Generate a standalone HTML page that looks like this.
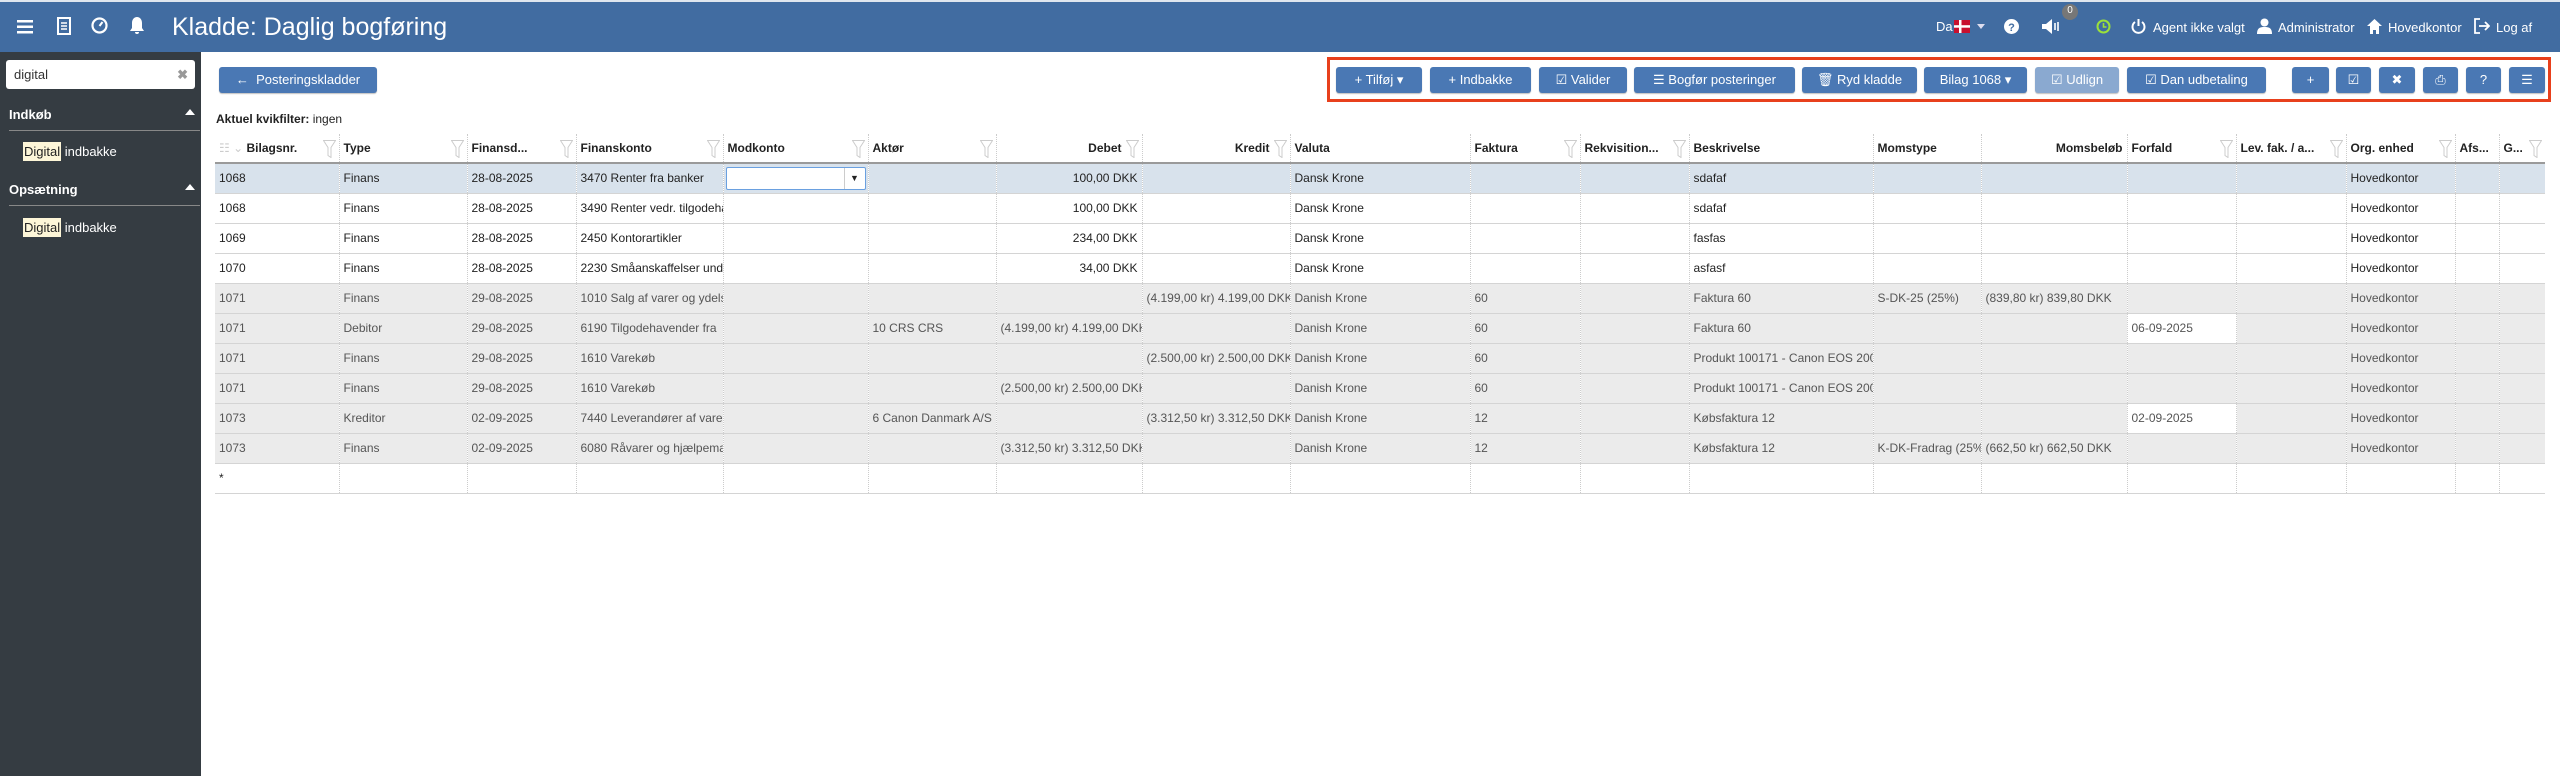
<!DOCTYPE html>
<html><head><meta charset="utf-8">
<style>
*{box-sizing:border-box;margin:0;padding:0}
body{width:2560px;height:776px;overflow:hidden;background:#fff;font-family:"Liberation Sans",Arial,sans-serif;position:relative;color:#222}
#top{position:absolute;left:0;top:0;width:2560px;height:52px;background:#416ca1;border-top:2px solid #dfe6ee}
#side{position:absolute;left:0;top:52px;width:201px;height:724px;background:#353c42}
.abs{position:absolute}
.tw{color:#fff;font-size:14px;white-space:nowrap}
.btn{position:absolute;top:67px;height:26px;background:#4a78b4;border-radius:3px;color:#fff;font-size:13px;line-height:26px;text-align:center;white-space:nowrap;box-shadow:0 1px 1px rgba(0,0,0,.25)}
table{position:absolute;left:215px;top:134px;border-collapse:collapse;table-layout:fixed;width:2330px;font-size:12px}
td,th{height:30px;padding:0 4px;overflow:hidden;white-space:nowrap;border-left:1px dotted #ccc;border-bottom:1px solid #d4d4d4;text-align:left}
th{height:29px;border-bottom:2px solid #9a9a9a;font-weight:bold;position:relative;font-size:12px}
td:first-child,th:first-child{border-left:none}
.r{text-align:right}
tr.sel td{background:#d8e2ec}
tr.g td{background:#ebebeb;color:#555}
td.wh{background:#fff!important;color:#222}
.f{position:absolute;right:3px;top:6px}
</style></head><body>
<div id="top">
<svg class="abs" style="left:17px;top:17px" width="16" height="15"><rect y="1" width="16" height="2.5" fill="#fff"/><rect y="6.5" width="16" height="2.5" fill="#fff"/><rect y="12" width="16" height="2.5" fill="#fff"/></svg>
<svg class="abs" style="left:57px;top:15px" width="14" height="18"><rect x="1" y="1" width="12" height="16" fill="none" stroke="#fff" stroke-width="2"/><path d="M4 6h6M4 9h6M4 12h6" stroke="#fff" stroke-width="1.5"/></svg>
<svg class="abs" style="left:91px;top:15px" width="17" height="17"><circle cx="8.5" cy="8.5" r="7" fill="none" stroke="#fff" stroke-width="2.2"/><path d="M8.5 9l3-4" stroke="#fff" stroke-width="2"/></svg>
<svg class="abs" style="left:130px;top:14px" width="14" height="19"><path d="M7 1c-3 0-5 2.5-5 6v5l-2 3h14l-2-3V7c0-3.5-2-6-5-6zM5 16a2 2 0 0 0 4 0z" fill="#fff"/></svg>
<div class="abs tw" style="left:172px;top:11px;font-size:25px">Kladde: Daglig bogføring</div>
<div class="abs tw" style="left:1936px;top:17px;font-size:13px">Da</div>
<svg class="abs" style="left:1954px;top:18px" width="16" height="13"><rect width="16" height="13" fill="#c8102e"/><rect x="5" width="2.5" height="13" fill="#fff"/><rect y="5.2" width="16" height="2.5" fill="#fff"/></svg>
<svg class="abs" style="left:1977px;top:22px" width="8" height="5"><path d="M0 0h8L4 5z" fill="#dde"/></svg>
<svg class="abs" style="left:2004px;top:17px" width="15" height="15"><circle cx="7.5" cy="7.5" r="7.5" fill="#fff"/><text x="7.5" y="12" font-size="11" font-weight="bold" text-anchor="middle" fill="#416ca1" font-family="Liberation Sans">?</text></svg>
<svg class="abs" style="left:2042px;top:17px" width="18" height="15"><path d="M0 5h4l6-5v15l-6-5H0z" fill="#fff"/><path d="M13 4v7M16 3v9" stroke="#fff" stroke-width="1.6"/></svg>
<div class="abs" style="left:2062px;top:2px;width:16px;height:16px;border-radius:8px;background:#777;color:#fff;font-size:10px;text-align:center;line-height:14px">0</div>
<svg class="abs" style="left:2096px;top:17px" width="15" height="15"><circle cx="7.5" cy="7.5" r="6" fill="none" stroke="#9be03a" stroke-width="2"/><path d="M7.5 4v4h3" stroke="#9be03a" stroke-width="1.6" fill="none"/></svg>
<svg class="abs" style="left:2131px;top:16px" width="15" height="16"><path d="M4 4a6 6 0 1 0 7 0" fill="none" stroke="#fff" stroke-width="2"/><path d="M7.5 1v7" stroke="#fff" stroke-width="2"/></svg>
<div class="abs tw" style="left:2153px;top:18px;font-size:13px">Agent ikke valgt</div>
<svg class="abs" style="left:2257px;top:16px" width="15" height="16"><circle cx="7.5" cy="4.5" r="4" fill="#fff"/><path d="M0 16c0-6 3-7 7.5-7S15 10 15 16z" fill="#fff"/></svg>
<div class="abs tw" style="left:2278px;top:18px;font-size:13px">Administrator</div>
<svg class="abs" style="left:2367px;top:17px" width="15" height="15"><path d="M7.5 0L15 7h-3v8H9v-4H6v4H3V7H0z" fill="#fff"/></svg>
<div class="abs tw" style="left:2388px;top:18px;font-size:13px">Hovedkontor</div>
<svg class="abs" style="left:2474px;top:16px" width="16" height="16"><path d="M6 1H1v14h5" fill="none" stroke="#fff" stroke-width="1.8"/><path d="M5 8h9M11 4l4 4-4 4" fill="none" stroke="#fff" stroke-width="1.8"/></svg>
<div class="abs tw" style="left:2496px;top:18px;font-size:13px">Log af</div>
</div>

<div id="side">
<div class="abs" style="left:6px;top:8px;width:189px;height:29px;background:#fff;border-radius:3px;font-size:13px;line-height:29px;padding-left:8px;color:#333">digital<span style="position:absolute;right:7px;color:#999;font-weight:bold">✖</span></div>
<div class="abs tw" style="left:9px;top:55px;font-size:13px;font-weight:bold">Indkøb</div>
<div class="abs" style="left:185px;top:57px;border:5px solid transparent;border-bottom:6px solid #fff;border-top:0"></div>
<div class="abs" style="left:9px;top:78px;width:191px;height:1px;background:#888"></div>
<div class="abs tw" style="left:23px;top:92px;font-size:13px"><span style="background:#fdf6d8;color:#222;padding:2px 1px">Digital</span> indbakke</div>
<div class="abs tw" style="left:9px;top:130px;font-size:13px;font-weight:bold">Opsætning</div>
<div class="abs" style="left:185px;top:132px;border:5px solid transparent;border-bottom:6px solid #fff;border-top:0"></div>
<div class="abs" style="left:9px;top:153px;width:191px;height:1px;background:#888"></div>
<div class="abs tw" style="left:23px;top:168px;font-size:13px"><span style="background:#fdf6d8;color:#222;padding:2px 1px">Digital</span> indbakke</div>
</div>

<div class="btn" style="left:219px;width:158px">←&nbsp; Posteringskladder</div>
<div class="abs" style="left:216px;top:112px;font-size:12px"><b>Aktuel kvikfilter:</b> ingen</div>

<div class="abs" style="left:1327px;top:57px;width:1224px;height:45px;border:3px solid #e8401c"></div>
<div class="btn" style="left:1336px;width:86px">+ Tilføj ▾</div>
<div class="btn" style="left:1430px;width:101px">+ Indbakke</div>
<div class="btn" style="left:1539px;width:88px">☑ Valider</div>
<div class="btn" style="left:1634px;width:161px">☰ Bogfør posteringer</div>
<div class="btn" style="left:1802px;width:115px">🗑 Ryd kladde</div>
<div class="btn" style="left:1924px;width:103px">Bilag 1068 ▾</div>
<div class="btn" style="left:2035px;width:84px;background:#8aa9d0">☑ Udlign</div>
<div class="btn" style="left:2127px;width:139px">☑ Dan udbetaling</div>
<div class="btn" style="left:2292px;width:37px">+</div>
<div class="btn" style="left:2336px;width:35px">☑</div>
<div class="btn" style="left:2379px;width:36px">✖</div>
<div class="btn" style="left:2423px;width:35px">⎙</div>
<div class="btn" style="left:2466px;width:35px">?</div>
<div class="btn" style="left:2509px;width:36px">☰</div>

<table>
<colgroup><col style="width:124px"><col style="width:128px"><col style="width:109px"><col style="width:147px"><col style="width:145px"><col style="width:128px"><col style="width:146px"><col style="width:148px"><col style="width:180px"><col style="width:110px"><col style="width:109px"><col style="width:184px"><col style="width:108px"><col style="width:146px"><col style="width:109px"><col style="width:110px"><col style="width:109px"><col style="width:44px"><col style="width:46px"></colgroup>
<tr>
<th><span style="color:#ccc;font-weight:normal">☷ ⌄</span> Bilagsnr.<svg class="f" width="13" height="18"><path d="M0.5 0.5h12l-4.5 7v10l-3-2v-8z" fill="none" stroke="#ccc"/></svg></th>
<th>Type<svg class="f" width="13" height="18"><path d="M0.5 0.5h12l-4.5 7v10l-3-2v-8z" fill="none" stroke="#ccc"/></svg></th>
<th>Finansd...<svg class="f" width="13" height="18"><path d="M0.5 0.5h12l-4.5 7v10l-3-2v-8z" fill="none" stroke="#ccc"/></svg></th>
<th>Finanskonto<svg class="f" width="13" height="18"><path d="M0.5 0.5h12l-4.5 7v10l-3-2v-8z" fill="none" stroke="#ccc"/></svg></th>
<th>Modkonto<svg class="f" width="13" height="18"><path d="M0.5 0.5h12l-4.5 7v10l-3-2v-8z" fill="none" stroke="#ccc"/></svg></th>
<th>Aktør<svg class="f" width="13" height="18"><path d="M0.5 0.5h12l-4.5 7v10l-3-2v-8z" fill="none" stroke="#ccc"/></svg></th>
<th class="r" style="padding-right:20px">Debet<svg class="f" width="13" height="18"><path d="M0.5 0.5h12l-4.5 7v10l-3-2v-8z" fill="none" stroke="#ccc"/></svg></th>
<th class="r" style="padding-right:20px">Kredit<svg class="f" width="13" height="18"><path d="M0.5 0.5h12l-4.5 7v10l-3-2v-8z" fill="none" stroke="#ccc"/></svg></th>
<th>Valuta</th>
<th>Faktura<svg class="f" width="13" height="18"><path d="M0.5 0.5h12l-4.5 7v10l-3-2v-8z" fill="none" stroke="#ccc"/></svg></th>
<th>Rekvisition...<svg class="f" width="13" height="18"><path d="M0.5 0.5h12l-4.5 7v10l-3-2v-8z" fill="none" stroke="#ccc"/></svg></th>
<th>Beskrivelse</th>
<th>Momstype</th>
<th class="r">Momsbeløb</th>
<th>Forfald<svg class="f" width="13" height="18"><path d="M0.5 0.5h12l-4.5 7v10l-3-2v-8z" fill="none" stroke="#ccc"/></svg></th>
<th>Lev. fak. / a...<svg class="f" width="13" height="18"><path d="M0.5 0.5h12l-4.5 7v10l-3-2v-8z" fill="none" stroke="#ccc"/></svg></th>
<th>Org. enhed<svg class="f" width="13" height="18"><path d="M0.5 0.5h12l-4.5 7v10l-3-2v-8z" fill="none" stroke="#ccc"/></svg></th>
<th>Afs...</th>
<th>G...<svg class="f" width="13" height="18"><path d="M0.5 0.5h12l-4.5 7v10l-3-2v-8z" fill="none" stroke="#ccc"/></svg></th>
</tr>
<tr class="sel"><td>1068</td><td>Finans</td><td>28-08-2025</td><td>3470 Renter fra banker</td><td style="padding:0 2px"><div style="position:relative;height:23px;background:#fff;border:1px solid #6aa0e0;border-radius:2px;width:140px"><span style="position:absolute;right:0;top:0;width:21px;height:21px;border-left:1px solid #ccc;font-size:9px;text-align:center;line-height:21px">▼</span></div></td><td></td><td class="r">100,00 DKK</td><td></td><td>Dansk Krone</td><td></td><td></td><td>sdafaf</td><td></td><td></td><td></td><td></td><td>Hovedkontor</td><td></td><td></td></tr>
<tr><td>1068</td><td>Finans</td><td>28-08-2025</td><td>3490 Renter vedr. tilgodehavender</td><td></td><td></td><td class="r">100,00 DKK</td><td></td><td>Dansk Krone</td><td></td><td></td><td>sdafaf</td><td></td><td></td><td></td><td></td><td>Hovedkontor</td><td></td><td></td></tr>
<tr><td>1069</td><td>Finans</td><td>28-08-2025</td><td>2450 Kontorartikler</td><td></td><td></td><td class="r">234,00 DKK</td><td></td><td>Dansk Krone</td><td></td><td></td><td>fasfas</td><td></td><td></td><td></td><td></td><td>Hovedkontor</td><td></td><td></td></tr>
<tr><td>1070</td><td>Finans</td><td>28-08-2025</td><td>2230 Småanskaffelser under</td><td></td><td></td><td class="r">34,00 DKK</td><td></td><td>Dansk Krone</td><td></td><td></td><td>asfasf</td><td></td><td></td><td></td><td></td><td>Hovedkontor</td><td></td><td></td></tr>
<tr class="g"><td>1071</td><td>Finans</td><td>29-08-2025</td><td>1010 Salg af varer og ydelser</td><td></td><td></td><td></td><td>(4.199,00 kr) 4.199,00 DKK</td><td>Danish Krone</td><td>60</td><td></td><td>Faktura 60</td><td>S-DK-25 (25%)</td><td>(839,80 kr) 839,80 DKK</td><td></td><td></td><td>Hovedkontor</td><td></td><td></td></tr>
<tr class="g"><td>1071</td><td>Debitor</td><td>29-08-2025</td><td>6190 Tilgodehavender fra</td><td></td><td>10 CRS CRS</td><td>(4.199,00 kr) 4.199,00 DKK</td><td></td><td>Danish Krone</td><td>60</td><td></td><td>Faktura 60</td><td></td><td></td><td class="wh">06-09-2025</td><td></td><td>Hovedkontor</td><td></td><td></td></tr>
<tr class="g"><td>1071</td><td>Finans</td><td>29-08-2025</td><td>1610 Varekøb</td><td></td><td></td><td></td><td>(2.500,00 kr) 2.500,00 DKK</td><td>Danish Krone</td><td>60</td><td></td><td>Produkt 100171 - Canon EOS 2000D</td><td></td><td></td><td></td><td></td><td>Hovedkontor</td><td></td><td></td></tr>
<tr class="g"><td>1071</td><td>Finans</td><td>29-08-2025</td><td>1610 Varekøb</td><td></td><td></td><td>(2.500,00 kr) 2.500,00 DKK</td><td></td><td>Danish Krone</td><td>60</td><td></td><td>Produkt 100171 - Canon EOS 2000D</td><td></td><td></td><td></td><td></td><td>Hovedkontor</td><td></td><td></td></tr>
<tr class="g"><td>1073</td><td>Kreditor</td><td>02-09-2025</td><td>7440 Leverandører af varer</td><td></td><td>6 Canon Danmark A/S</td><td></td><td>(3.312,50 kr) 3.312,50 DKK</td><td>Danish Krone</td><td>12</td><td></td><td>Købsfaktura 12</td><td></td><td></td><td class="wh">02-09-2025</td><td></td><td>Hovedkontor</td><td></td><td></td></tr>
<tr class="g"><td>1073</td><td>Finans</td><td>02-09-2025</td><td>6080 Råvarer og hjælpematerialer</td><td></td><td></td><td>(3.312,50 kr) 3.312,50 DKK</td><td></td><td>Danish Krone</td><td>12</td><td></td><td>Købsfaktura 12</td><td>K-DK-Fradrag (25%)</td><td>(662,50 kr) 662,50 DKK</td><td></td><td></td><td>Hovedkontor</td><td></td><td></td></tr>
<tr><td>*</td><td></td><td></td><td></td><td></td><td></td><td></td><td></td><td></td><td></td><td></td><td></td><td></td><td></td><td></td><td></td><td></td><td></td><td></td></tr>
</table>
</body></html>
